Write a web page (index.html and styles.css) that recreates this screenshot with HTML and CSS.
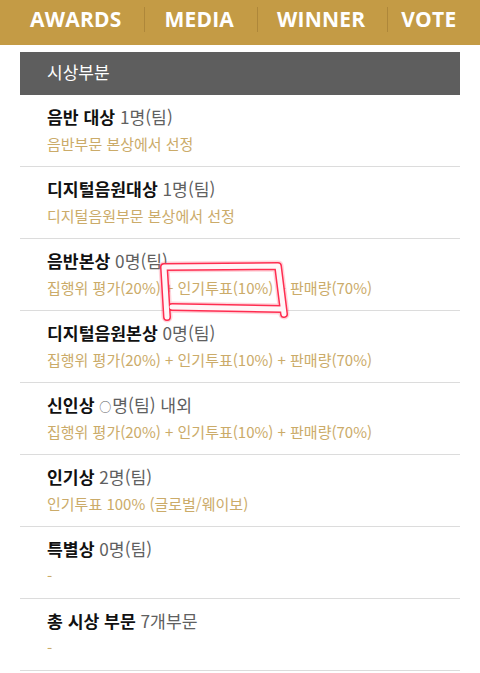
FILE: index.html
```html
<!DOCTYPE html>
<html lang="ko">
<head>
<meta charset="utf-8">
<title>시상부분</title>
<link rel="stylesheet" href="styles.css">
</head>
<body>
<header class="topnav">
  <span class="nav-item">AWARDS</span>
  <span class="nav-sep"></span>
  <span class="nav-item">MEDIA</span>
  <span class="nav-sep"></span>
  <span class="nav-item">WINNER</span>
  <span class="nav-sep nav-sep-last"></span>
  <span class="nav-item">VOTE</span>
</header>
<div class="section-bar">시상부분</div>
<ul class="award-list">
  <li class="award">
    <div class="award-title"><b>음반 대상</b> <span class="count">1명(팀)</span></div>
    <div class="award-desc">음반부문 본상에서 선정</div>
  </li>
  <li class="award">
    <div class="award-title"><b>디지털음원대상</b> <span class="count">1명(팀)</span></div>
    <div class="award-desc">디지털음원부문 본상에서 선정</div>
  </li>
  <li class="award">
    <div class="award-title"><b>음반본상</b> <span class="count">0명(팀)</span></div>
    <div class="award-desc">집행위 평가(20%) + 인기투표(10%) + 판매량(70%)</div>
  </li>
  <li class="award">
    <div class="award-title"><b>디지털음원본상</b> <span class="count">0명(팀)</span></div>
    <div class="award-desc">집행위 평가(20%) + 인기투표(10%) + 판매량(70%)</div>
  </li>
  <li class="award">
    <div class="award-title"><b>신인상</b> <span class="count"><span class="blank">○</span>명(팀) 내외</span></div>
    <div class="award-desc">집행위 평가(20%) + 인기투표(10%) + 판매량(70%)</div>
  </li>
  <li class="award">
    <div class="award-title"><b>인기상</b> <span class="count">2명(팀)</span></div>
    <div class="award-desc">인기투표 100% (글로벌/웨이보)</div>
  </li>
  <li class="award">
    <div class="award-title"><b>특별상</b> <span class="count">0명(팀)</span></div>
    <div class="award-desc">-</div>
  </li>
  <li class="award">
    <div class="award-title"><b>총 시상 부문</b> <span class="count">7개부문</span></div>
    <div class="award-desc">-</div>
  </li>
</ul>
<svg class="scribble" width="480" height="673" viewBox="0 0 480 673" aria-hidden="true">
  <g fill="none" stroke-linecap="round" stroke-linejoin="round">
    <path class="glow" d="M167 317 L164 267 L278 266 L284 314 M172 307 L282 309"/>
    <path class="edge" d="M167 317 L164 267 L278 266 L284 314 M172 307 L282 309"/>
    <path class="core" d="M167 317 L164 267 L278 266 L284 314 M172 307 L282 309"/>
  </g>
</svg>
</body>
</html>
```
FILE: styles.css
```css
html, body {
  margin: 0;
  padding: 0;
  background: #ffffff;
}
body {
  position: relative;
  width: 480px;
  min-height: 673px;
  overflow: hidden;
  font-family: "Noto Sans CJK KR", "Noto Sans", sans-serif;
}
.topnav {
  display: flex;
  align-items: center;
  height: 45px;
  box-sizing: border-box;
  padding: 0 0 7px 30px;
  background: #c49b45;
  white-space: nowrap;
}
.nav-item {
  font-family: "Open Sans", "Liberation Sans", sans-serif;
  font-weight: 700;
  font-size: 21px;
  line-height: 25px;
  color: #ffffff;
  letter-spacing: 0.2px;
}
.nav-sep {
  width: 1px;
  height: 25px;
  background: #ae873a;
  margin: 0 19px 0 23px;
}
.nav-sep-last {
  margin: 0 13px 0 22px;
}
.section-bar {
  margin: 7px 20px 0;
  height: 43px;
  box-sizing: border-box;
  padding: 0 0 3px 27px;
  line-height: 40px;
  background: #5e5e5e;
  color: #ffffff;
  font-size: 17px;
}
.award-list {
  list-style: none;
  margin: 0 20px;
  padding: 0;
}
.award {
  padding: 10px 27px 10px;
  border-bottom: 1px solid #dcdcdc;
}
.award-title {
  height: 24px;
  font-size: 17.2px;
  line-height: 24px;
  color: #111111;
}
.award-title b {
  font-weight: 700;
}
.count {
  color: #606060;
  font-weight: 400;
}
.blank {
  font-size: 12px;
  line-height: 0;
  margin-right: 1px;
}
.award-desc {
  margin-top: 3px;
  font-size: 15px;
  line-height: 24px;
  color: #cbab69;
}
.scribble {
  position: absolute;
  left: 0;
  top: 0;
  pointer-events: none;
}
.scribble .glow {
  stroke: rgba(255, 60, 90, 0.22);
  stroke-width: 11;
}
.scribble .edge {
  stroke: #ff2d50;
  stroke-width: 8;
}
.scribble .core {
  stroke: #fff6f8;
  stroke-width: 5;
}
```
